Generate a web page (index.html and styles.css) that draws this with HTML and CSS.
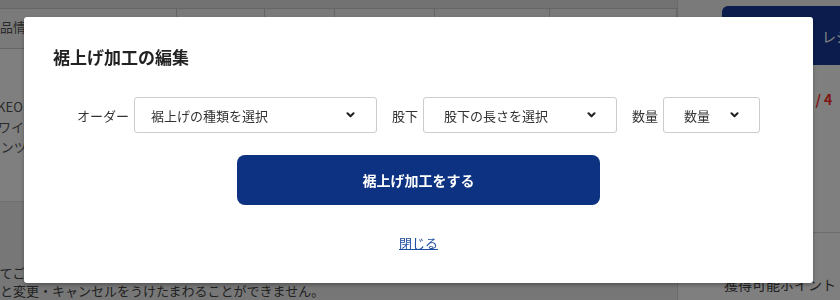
FILE: index.html
```html
<!DOCTYPE html>
<html lang="ja">
<head>
  <meta charset="UTF-8" />
  <meta name="viewport" content="width=device-width, initial-scale=1.0"/>
  <title>裾上げ加工の編集</title>
  <link rel="stylesheet" href="styles.css">
</head>
<body>
  <div class="cart">
    <div class="cart-main">
      <div class="cart-head">
        <div class="head-cell head-item">商品情報</div>
        <div class="head-cell head-w1"></div>
        <div class="head-cell head-w2"></div>
        <div class="head-cell head-w3"></div>
        <div class="head-cell head-w4"></div>
        <div class="head-cell head-w5"></div>
      </div>
      <div class="cart-item">
        <p class="item-line item-line-brand">TAKEO</p>
        <p class="item-line item-line-shift">ワイル</p>
        <p class="item-line">パンツ</p>
      </div>
      <div class="cart-note">
        <p class="note-line">いてご</p>
        <p class="note-line">ると変更・キャンセルをうけたまわることができません。</p>
      </div>
    </div>
    <aside class="cart-side">
      <div class="checkout">レジに進む</div>
      <div class="side-count">1 / 4</div>
      <div class="side-points">獲得可能ポイント</div>
    </aside>
  </div>

  <div class="overlay"></div>

  <div class="modal">
    <h2 class="modal-title">裾上げ加工の編集</h2>

    <div class="order-form">
      <div class="field">
        <span class="field-label">オーダー</span>
        <div class="select select-type">
          <span>裾上げの種類を選択</span>
          <svg class="chevron" viewBox="0 0 10 7" width="9" height="6"><polyline points="1.5,1.5 5,5 8.5,1.5" /></svg>
        </div>
      </div>
      <div class="field">
        <span class="field-label">股下</span>
        <div class="select select-length">
          <span>股下の長さを選択</span>
          <svg class="chevron" viewBox="0 0 10 7" width="9" height="6"><polyline points="1.5,1.5 5,5 8.5,1.5" /></svg>
        </div>
      </div>
      <div class="field">
        <span class="field-label">数量</span>
        <div class="select select-qty">
          <span>数量</span>
          <svg class="chevron" viewBox="0 0 10 7" width="9" height="6"><polyline points="1.5,1.5 5,5 8.5,1.5" /></svg>
        </div>
      </div>
    </div>

    <button class="submit">裾上げ加工をする</button>
    <a class="close-link" href="#">閉じる</a>
  </div>
</body>
</html>
```

FILE: styles.css
```css
:root {
  --navy: #0c3281;
  --link-blue: #1d4fa3;
  --line: #cccccc;
  --text: #333;
}

body {
  margin: 0;
  font-family: "Noto Sans CJK JP", "Noto Sans", sans-serif;
  background: #fff;
  color: #555;
  height: 100vh;
  overflow: hidden;
}

p {
  margin: 0;
}

/* page behind the dialog */

.cart {
  display: flex;
  margin-left: -18px;
  height: 300px;
}

.cart-main {
  width: 695px;
  flex-shrink: 0;
  display: flex;
  flex-direction: column;
  padding-top: 8px;
  background: #e4e4e4;
  border-right: 1px solid #d6d6d6;
}

.cart-head {
  display: flex;
  height: 40px;
  background: #f4f4f4;
  border-top: 1px solid var(--line);
  border-bottom: 1px solid var(--line);
}

.head-cell {
  box-sizing: border-box;
  border-right: 1px solid var(--line);
  font-size: 13px;
  line-height: 36px;
  padding-left: 5px;
}

.head-item { width: 195px; }
.head-w1 { width: 88px; }
.head-w2 { width: 70px; }
.head-w3 { width: 100px; }
.head-w4 { width: 115px; }
.head-w5 { width: 127px; }

.cart-item {
  height: 156px;
  box-sizing: border-box;
  background: #fff;
  padding: 48px 0 0 5px;
  border-bottom: 1px solid #e0e0e0;
}

.item-line {
  font-size: 13px;
  line-height: 20px;
}

.item-line-brand {
  margin-left: -5px;
}

.item-line-shift {
  padding-left: 11px;
}

.cart-note {
  flex: 1;
  background: #eeeeee;
  padding: 62px 0 0 5px;
}

.note-line {
  font-size: 13px;
  line-height: 18px;
  color: #444;
}

.cart-side {
  width: 200px;
  flex-shrink: 0;
  display: flex;
  flex-direction: column;
  background: #f4f4f4;
}

.checkout {
  margin: 6px 0 0 44px;
  height: 59px;
  border-radius: 6px 0 0 0;
  background: #16399a;
  color: #fff;
  font-size: 14px;
  white-space: nowrap;
  display: flex;
  align-items: center;
  padding-left: 100px;
}

.side-count {
  padding: 24px 0 0 126px;
  height: 168px;
  box-sizing: border-box;
  color: #ff2a2a;
  font-size: 14px;
  font-weight: 700;
  border-bottom: 1px solid #d8d8d8;
  background: #ffffff;
}

.side-points {
  padding: 41px 0 0 46px;
  font-size: 14px;
  line-height: 20px;
  color: #444;
  white-space: nowrap;
  background: #fff;
  flex: 1;
}

.overlay {
  position: fixed;
  inset: 0;
  background: rgba(0, 0, 0, 0.5);
}

/* dialog */

.modal {
  position: fixed;
  left: 24px;
  top: 17px;
  width: 789px;
  height: 266px;
  box-sizing: border-box;
  padding: 28px 29px 0;
  background: #fff;
  border-radius: 3px;
  box-shadow: 0 2px 4px rgba(0, 0, 0, 0.3);
}

.modal-title {
  margin: 0 0 28px;
  font-size: 17px;
  line-height: 24px;
  font-weight: 700;
  color: #222;
}

.order-form {
  display: flex;
  justify-content: center;
  align-items: center;
  gap: 15px;
  height: 36px;
}

.field {
  display: flex;
  align-items: center;
  gap: 5px;
}

.field-label {
  font-size: 13px;
  color: var(--text);
}

.select {
  height: 36px;
  box-sizing: border-box;
  border: 1px solid var(--line);
  border-radius: 3px;
  display: flex;
  align-items: center;
  justify-content: space-between;
  padding: 0 20px;
  font-size: 13px;
  color: var(--text);
}

.select-type {
  width: 243px;
  padding-left: 16px;
  padding-right: 21px;
}

.select-length {
  width: 194px;
}

.select-qty {
  width: 97px;
}

.chevron polyline {
  fill: none;
  stroke: #222;
  stroke-width: 2.4;
  stroke-linecap: round;
  stroke-linejoin: round;
}

.submit {
  display: block;
  width: 363px;
  height: 50px;
  margin: 22px auto 0;
  background: var(--navy);
  border: none;
  border-radius: 8px;
  color: #fff;
  font-family: inherit;
  font-size: 14px;
  font-weight: 700;
  cursor: pointer;
}

.close-link {
  display: block;
  width: fit-content;
  margin: 29px auto 0;
  font-size: 13px;
  line-height: 18px;
  color: var(--link-blue);
  text-decoration: underline;
}
```
